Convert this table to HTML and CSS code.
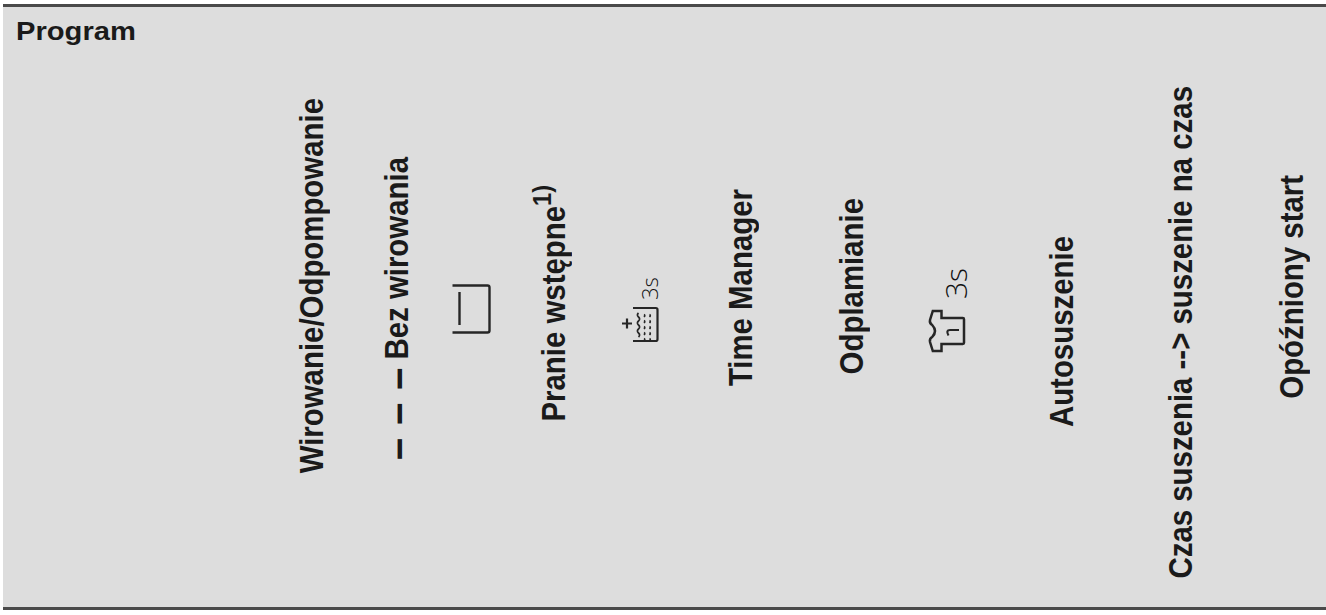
FILE: index.html
```html
<!DOCTYPE html>
<html lang="pl">
<head>
<meta charset="utf-8">
<title>Program</title>
<link rel="stylesheet" href="styles.css">
</head>
<body>
<div class="header-row">
  <div class="cell cell-program"><span class="program">Program</span></div>
  <div class="cell c1"><span class="vt">Wirowanie/Odpompowanie</span></div>
  <div class="cell c2"><span class="vt"><span class="dashes">– – –</span> Bez wirowania</span></div>
  <div class="cell c3">
    <svg class="icon" width="40" height="50" viewBox="0 0 40 50">
      <path d="M1.5 1.5 H36.5 Q38.5 1.5 38.5 3.5 V46.5 Q38.5 48.5 36.5 48.5 H1.5" fill="none" stroke="#262626" stroke-width="2.4"/>
      <path d="M8.5 8 V41" fill="none" stroke="#262626" stroke-width="2.4"/>
    </svg>
  </div>
  <div class="cell c4"><span class="vt">Pranie wstępne<sup>1)</sup></span></div>
  <div class="cell c5">
    <svg class="icon" width="58" height="76" viewBox="0 0 58 76">
      <g transform="translate(8 8)">
        <path d="M14 33 H36.8 Q38.5 33 38.5 34.7 V64.3 Q38.5 66 36.8 66 H14" fill="none" stroke="#262626" stroke-width="2.2"/>
        <path d="M3 48.5 H13 M8 43.5 V53.5" fill="none" stroke="#262626" stroke-width="2.2"/>
        <path d="M19.5 38 q-2.2 2 0 4 t0 4 t0 4 t0 4 t0 4 t0 4" fill="none" stroke="#262626" stroke-width="1.7"/>
        <path d="M25 39.5 q1.6 1 0 2.5 m0 3.5 q1.6 1 0 2.5 m0 3.5 q1.6 1 0 2.5 m0 3.5 q1.6 1 0 2.5 m0 3.5 q1.6 1 0 2.5" fill="none" stroke="#262626" stroke-width="1.6"/>
        <path d="M30.5 39.5 q1.6 1 0 2.5 m0 3.5 q1.6 1 0 2.5 m0 3.5 q1.6 1 0 2.5 m0 3.5 q1.6 1 0 2.5 m0 3.5 q1.6 1 0 2.5" fill="none" stroke="#262626" stroke-width="1.6"/>
        <text class="svg-3s" x="39" y="25" transform="rotate(-90 39 25)" font-size="22">3s</text>
      </g>
    </svg>
  </div>
  <div class="cell c6"><span class="vt">Time Manager</span></div>
  <div class="cell c7"><span class="vt">Odplamianie</span></div>
  <div class="cell c8">
    <svg class="icon" width="64" height="100" viewBox="0 0 64 100">
      <g transform="translate(10 8)">
        <g transform="translate(4 90) rotate(-90)">
          <path d="M1 3.8 L10 1 Q13.5 0.3 15 3.2 Q21 8.8 27 3.2 Q28.5 0.3 32 1 L41 3.8 V12.5 H34 V33.8 Q34 35 32.8 35 H9.2 Q8 35 8 33.8 V12.5 H1 Z" fill="none" stroke="#262626" stroke-width="2.5"/>
          <path d="M16.5 19.5 Q22 16.5 22 21 V30" fill="none" stroke="#262626" stroke-width="2.1"/>
        </g>
        <text class="svg-3s" x="42" y="37" transform="rotate(-90 42 37)" font-size="30">3s</text>
      </g>
    </svg>
  </div>
  <div class="cell c9"><span class="vt">Autosuszenie</span></div>
  <div class="cell c10"><span class="vt">Czas suszenia --&gt; suszenie na czas</span></div>
  <div class="cell c11"><span class="vt">Opóźniony start</span></div>
</div>
</body>
</html>
```
FILE: styles.css
```css
html, body {
  margin: 0;
  padding: 0;
  background: #ffffff;
}

.header-row {
  display: flex;
  margin: 4px 0 0 3px;
  height: 606px;
  box-sizing: border-box;
  border-top: 3px solid #4a4a4a;
  border-bottom: 3px solid #4a4a4a;
  background: #dddddd;
  color: #1a1a1a;
  font-family: "Liberation Sans", Arial, sans-serif;
}

.cell {
  flex: none;
  box-sizing: border-box;
  display: flex;
  flex-direction: column;
  justify-content: flex-end;
  align-items: center;
}

.cell-program {
  width: 267px;
  justify-content: flex-start;
  align-items: flex-start;
  padding: 11px 0 0 13px;
}

.program {
  display: inline-block;
  font-weight: bold;
  font-size: 26.5px;
  line-height: 26.5px;
  transform: scaleX(1.1);
  transform-origin: left center;
}

.vt {
  writing-mode: vertical-rl;
  transform: rotate(180deg) scaleX(1.1);
  white-space: nowrap;
  font-weight: bold;
  font-size: 29.4px;
  line-height: 33px;
}

.vt sup {
  font-size: 80%;
  line-height: 0;
}

.dashes {
  font-size: 135%;
  word-spacing: 2px;
}

.icon {
  overflow: visible;
}

.svg-3s {
  font-family: "Open Sans", "DejaVu Sans", sans-serif;
  font-weight: 300;
  fill: #111111;
}

.c1 { width: 82px; padding-bottom: 134px; }
.c2 { width: 89px; padding-bottom: 147px; }
.c3 { width: 60px; padding-bottom: 273px; }
.c4 { width: 105px; padding-bottom: 185px; }
.c5 { width: 68px; padding-bottom: 264px; }
.c6 { width: 133px; padding-bottom: 221px; }
.c7 { width: 89px; padding-bottom: 233px; }
.c8 { width: 102px; padding-bottom: 253px; }
.c9 { width: 126px; padding-bottom: 180px; }
.c10 { width: 112px; padding-bottom: 28px; }
.c11 { flex: 1 1 auto; padding-left: 20px; padding-bottom: 208px; }
```
